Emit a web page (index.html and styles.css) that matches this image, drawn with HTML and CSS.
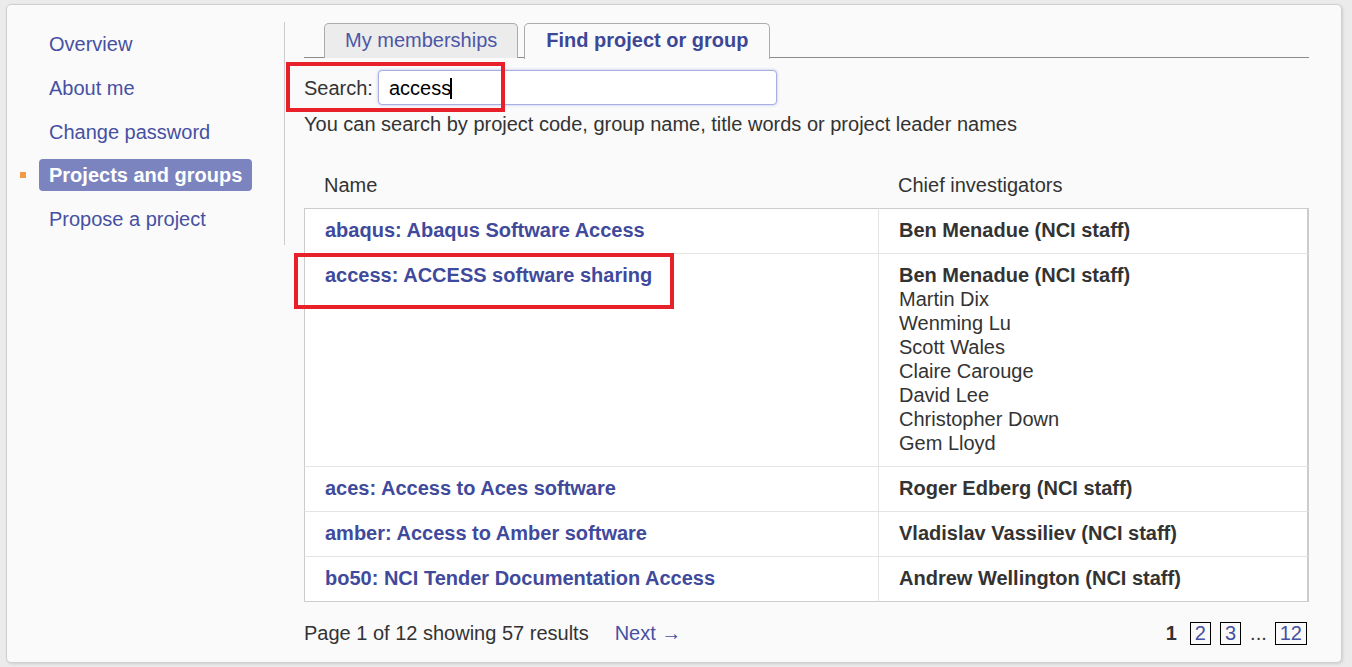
FILE: index.html
```html
<!DOCTYPE html>
<html lang="en">
<head>
<meta charset="utf-8">
<title>Projects and groups</title>
<link rel="stylesheet" href="styles.css">
</head>
<body>
<div class="card">
  <nav class="sidebar">
    <ul class="nav">
      <li class="nav-item"><span class="marker"></span><a class="nav-link" href="#">Overview</a></li>
      <li class="nav-item"><span class="marker"></span><a class="nav-link" href="#">About me</a></li>
      <li class="nav-item"><span class="marker"></span><a class="nav-link" href="#">Change password</a></li>
      <li class="nav-item active"><span class="marker"></span><a class="nav-link" href="#">Projects and groups</a></li>
      <li class="nav-item"><span class="marker"></span><a class="nav-link" href="#">Propose a project</a></li>
    </ul>
  </nav>
  <main class="main">
    <div class="tabs">
      <a class="tab" href="#">My memberships</a>
      <a class="tab tab-active" href="#">Find project or group</a>
    </div>
    <div class="search-row">
      <span class="search-label">Search:</span>
      <div class="search-box" role="textbox">access<span class="caret"></span></div>
    </div>
    <p class="help">You can search by project code, group name, title words or project leader names</p>
    <table class="results">
      <colgroup><col class="col-name"><col class="col-ci"></colgroup>
      <thead>
        <tr><th>Name</th><th>Chief investigators</th></tr>
      </thead>
      <tbody>
        <tr>
          <td><a class="proj" href="#">abaqus: Abaqus Software Access</a></td>
          <td><b>Ben Menadue (NCI staff)</b></td>
        </tr>
        <tr>
          <td><a class="proj" href="#">access: ACCESS software sharing</a></td>
          <td><b>Ben Menadue (NCI staff)</b><br>Martin Dix<br>Wenming Lu<br>Scott Wales<br>Claire Carouge<br>David Lee<br>Christopher Down<br>Gem Lloyd</td>
        </tr>
        <tr>
          <td><a class="proj" href="#">aces: Access to Aces software</a></td>
          <td><b>Roger Edberg (NCI staff)</b></td>
        </tr>
        <tr>
          <td><a class="proj" href="#">amber: Access to Amber software</a></td>
          <td><b>Vladislav Vassiliev (NCI staff)</b></td>
        </tr>
        <tr>
          <td><a class="proj" href="#">bo50: NCI Tender Documentation Access</a></td>
          <td><b>Andrew Wellington (NCI staff)</b></td>
        </tr>
      </tbody>
    </table>
    <div class="footer">
      <span class="summary">Page 1 of 12 showing 57 results</span>
      <a class="next" href="#">Next →</a>
      <div class="pager">
        <span class="page-current">1</span>
        <a class="page-box" href="#">2</a>
        <a class="page-box" href="#">3</a>
        <span class="ellipsis">...</span>
        <a class="page-box" href="#">12</a>
      </div>
    </div>
  </main>
  <div class="annot annot-search"></div>
  <div class="annot annot-row"></div>
</div>
</body>
</html>
```

FILE: styles.css
```css
* { box-sizing: border-box; }

html, body {
  margin: 0;
  padding: 0;
}

body {
  background: #ebebeb;
  font-family: "Liberation Sans", Arial, sans-serif;
  font-size: 20px;
  line-height: 24px;
  color: #333;
  width: 1352px;
  height: 667px;
  overflow: hidden;
}

a { text-decoration: none; color: #3f4a9c; }

.card {
  position: relative;
  margin: 4px 10px 0 6px;
  height: 659px;
  background: #fafafa;
  border: 1px solid #cfcfcf;
  border-radius: 5px;
  box-shadow: 1px 1px 3px rgba(0, 0, 0, 0.12);
  display: flex;
  align-items: flex-start;
  padding-top: 17px;
}

.sidebar {
  width: 278px;
  flex: none;
  border-right: 1px solid #cccccc;
  padding: 6px 0 10px 13px;
}

.nav {
  list-style: none;
  margin: 0;
  padding: 0;
  display: flex;
  flex-direction: column;
  gap: 11.75px;
}

.nav-item {
  display: flex;
  align-items: center;
  gap: 13px;
}

.marker {
  width: 6px;
  height: 6px;
  flex: none;
}

.nav-item.active .marker { background: #f39a45; }

.nav-link {
  padding: 4px 10px;
  border-radius: 4px;
  color: #4650a2;
}

.nav-item.active .nav-link {
  background: #7c84bf;
  color: #ffffff;
  font-weight: bold;
}

.main {
  flex: 1;
  min-width: 0;
  padding: 1px 32px 0 19px;
}

.tabs {
  display: flex;
  gap: 6px;
  padding-left: 20px;
  border-bottom: 1px solid #8c8c8c;
  height: 35px;
}

.tab {
  display: block;
  height: 35px;
  padding: 4px 20px 6px;
  border: 1px solid #ababab;
  border-bottom: none;
  border-radius: 5px 5px 0 0;
  background: #ececec;
  color: #4d56a6;
}

.tab-active {
  background: #fafafa;
  height: 36px;
  font-weight: bold;
  color: #3d4795;
  padding: 4px 21px 6px;
}

.search-row {
  display: flex;
  align-items: center;
  gap: 5px;
  margin-top: 12px;
}

.search-box {
  width: 399px;
  height: 35px;
  border: 1px solid #a9aee0;
  border-radius: 4px;
  background: #ffffff;
  box-shadow: 0 0 3px rgba(110, 120, 230, 0.45);
  padding: 5px 10px 4px;
  color: #000;
  display: flex;
  align-items: center;
}

.caret {
  display: inline-block;
  width: 2px;
  height: 21px;
  background: #000;
  margin-left: -1px;
}

.help {
  margin: 7px 0 0;
}

.results {
  margin-top: 26px;
  width: 1005px;
  border-collapse: separate;
  border-spacing: 0;
  table-layout: fixed;
}

.col-name { width: 574px; }

.results th {
  text-align: left;
  font-weight: normal;
  padding: 11px 20px 11px;
}

.results td {
  background: #ffffff;
  vertical-align: top;
  padding: 9px 20px 11px;
  border-top: 1px solid #e4e4e4;
}

.results tbody tr:first-child td { border-top: 1px solid #cccccc; }
.results tbody tr:last-child td { border-bottom: 1px solid #cccccc; }
.results td:first-child { border-left: 1px solid #cccccc; }
.results td:last-child {
  border-left: 1px solid #e4e4e4;
  border-right: 2px solid #cccccc;
}

.results b { font-weight: bold; color: #333; }

.proj { font-weight: bold; color: #3f4a9c; }

.footer {
  display: flex;
  align-items: center;
  margin-top: 19px;
}

.next {
  margin-left: 26px;
  color: #4650a2;
}

.pager {
  margin-left: auto;
  margin-right: 2px;
  display: flex;
  align-items: center;
  gap: 9px;
}

.page-current {
  font-weight: bold;
  margin-right: 4px;
}

.page-box {
  border: 1px solid #000;
  padding: 0 4px;
  line-height: 21px;
  color: #4650a2;
}

.ellipsis { margin-right: -1px; }

.annot {
  position: absolute;
  border: 4px solid #e8202a;
  pointer-events: none;
}

.annot-search {
  left: 279px;
  top: 57px;
  width: 219px;
  height: 50px;
}

.annot-row {
  left: 287px;
  top: 248px;
  width: 380px;
  height: 56px;
}
```
